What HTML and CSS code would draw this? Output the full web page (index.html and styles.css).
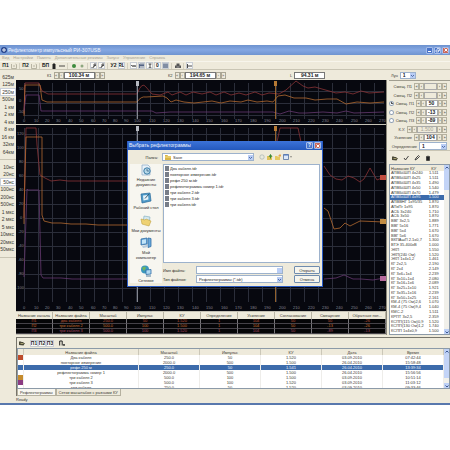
FILE: index.html
```html
<!DOCTYPE html>
<html lang="ru">
<head>
<meta charset="utf-8">
<title>Рефлектометр импульсный РИ-307USB</title>
<link rel="stylesheet" href="styles.css">
</head>
<body>
<div class="window">
  <header class="titlebar">
    <svg class="app-icon" viewBox="0 0 6 6"><circle cx="3" cy="3" r="3" fill="#27458c"/><path d="M1 3h4M3 1v4" stroke="#e8edf8" stroke-width="1"/></svg>
    <h1>Рефлектометр импульсный РИ-307USB</h1>
    <button class="cap" aria-label="Свернуть"><svg viewBox="0 0 6 6"><path d="M1 4.500h3" stroke="#fff"/></svg></button>
    <button class="cap" aria-label="Восстановить"><svg viewBox="0 0 6 6"><path d="M2 1.500h2.500v2.500M1 3h2.500v2h-2.500z" fill="none" stroke="#fff" stroke-width=".7"/></svg></button>
    <button class="cap close" aria-label="Закрыть"><svg viewBox="0 0 6 6"><path d="M1.500 1.500l3 3M4.500 1.500l-3 3" stroke="#fff"/></svg></button>
  </header>
  <nav class="menu"><a href="#">Вид</a><a href="#">Настройки</a><a href="#">Память</a><a href="#">Дополнительные режимы</a><a href="#">Запуск</a><a href="#">Управление</a><a href="#">Справка</a></nav>
  <div class="toolbar">
    <button>П1</button><button aria-label="Сохранить П1"><svg viewBox="0 0 6 6"><path d="M.5 1v4.500h5v-4l-1-.5M2 3h2" fill="none" stroke="#aaa694" stroke-width=".8"/></svg></button>
    <i></i><button>П2</button><button aria-label="Сохранить П2"><svg viewBox="0 0 6 6"><path d="M.5 1v4.500h5v-4l-1-.5M2 3h2" fill="none" stroke="#aaa694" stroke-width=".8"/></svg></button>
    <i></i><button>БП</button><button aria-label="Батарея"><svg viewBox="0 0 6 6"><path d="M1.500 1h3v5h-3zM2.500 0h1v1h-1z" fill="#222"/></svg></button><button aria-label="Линия"><svg viewBox="0 0 6 6"><path d="M0 3h6" stroke="#222" stroke-width=".8"/></svg></button>
    <i></i><button aria-label="Запуск"><svg viewBox="0 0 6 6"><circle cx="3" cy="3" r="2" fill="#3d8b3d"/></svg></button><button aria-label="Стоп"><svg viewBox="0 0 6 6"><circle cx="3" cy="3" r="1.500" fill="#8da77f"/></svg></button>
    <i></i><button class="on" aria-label="Курсор 1"><svg viewBox="0 0 6 6"><path d="M0 5h2l1-2M3 4V1h2v1.500H3" fill="none" stroke="#333" stroke-width=".8"/></svg></button><button class="on" aria-label="Курсор 2"><svg viewBox="0 0 6 6"><path d="M0 5h2l1-2M3 4V1h2v1.500H3" fill="none" stroke="#333" stroke-width=".8"/></svg></button>
    <i></i><button>У2</button><button class="on">RL</button>
    <i></i><button class="on" aria-label="Волна"><svg viewBox="0 0 6 6"><path d="M0 3l1-1 1 2 1-2 1 2 1-2 1 1" fill="none" stroke="#333" stroke-width=".7"/></svg></button><button class="on" aria-label="Таблица"><svg viewBox="0 0 6 6"><path d="M.5 1h5v4.500h-5zM.5 2.500h5M2 1v4M4 1v4" fill="none" stroke="#2a3d66" stroke-width=".7"/></svg></button><button class="on" aria-label="Высота"><svg viewBox="0 0 6 6"><path d="M1.500 1h3M3 1v4M1.500 5h3" stroke="#222" stroke-width=".8"/></svg></button><button class="on">0</button><button class="on" aria-label="Сетка"><svg viewBox="0 0 6 6"><path d="M0 1h6M0 3h6M0 5h6M1 1v4M3 1v4M5 1v4" stroke="#3c5275" stroke-width=".8"/></svg></button>
    <i></i><button aria-label="Печать"><svg viewBox="0 0 6 6"><path d="M1.500 .5h3v2h1.500v2.500h-6v-2.500h1.500z" fill="#555"/><path d="M1.500 4h3" stroke="#ddd" stroke-width=".6"/></svg></button>
    <i></i><button class="on" aria-label="Ширина"><svg viewBox="0 0 6 6"><path d="M.5 1v4M5.500 1v4M1 3h4" stroke="#222" stroke-width=".8"/></svg></button>
  </div>
  <div class="main">
    <aside class="scales">
      <div class="ranges"><button>625м</button><button>125м</button><button class="cur">250м</button><button>500м</button><button>1 км</button><button>2 км</button><button>4 км</button><button>8 км</button><button>16 км</button><button>32км</button><button>64км</button></div>
      <div class="pulses"><button>10нс</button><button>20нс</button><button class="cur">50нс</button><button>100нс</button><button>200нс</button><button>500нс</button><button>1 мкс</button><button>2 мкс</button><button>5 мкс</button><button>10мкс</button><button>20мкс</button><button>50мкс</button></div>
    </aside>
    <div class="work">
      <div class="cursors">
        <div class="field k1"><label for="k1">К1</label><button>«</button><button>‹</button><input id="k1" value="100.34 м"><button>›</button><button>»</button></div>
        <div class="field k2"><label for="k2">К2</label><button>«</button><button>‹</button><input id="k2" value="194.65 м"><button>›</button><button>»</button></div>
        <div class="field len"><label for="len">L</label><input id="len" value="94.31 м"></div>
        <div class="field mem"><label for="mem">Луч</label><select id="mem"><option>1</option></select></div>
      </div>
      <div class="upper">
        <div class="plots">
          <svg class="plot" viewBox="0 0 370 44">
            <defs><pattern id="g1" x="8" y="3" width="14" height="12" patternUnits="userSpaceOnUse"><path d="M.5 0v12M0 8.500h14" stroke="#2b2e3a" stroke-width="1"/></pattern></defs>
            <rect width="370" height="44" fill="#07080f"/><rect x="8" y="3" width="360" height="36" fill="url(#g1)"/>
            <path d="M8 34L9 3H23L26 11 32 14H121Q126 1 130 7L136 14 144 15 152 12 156 15 164 12 170 15 177 12 186 14 194 12 200 15 208 12 215 15 223 13 230 15 239 12 246 15 253 13 263 14 270 10 280 1 287 6 292 8 299 7 306 9 313 11 320 13 329 12 337 14 345 11 353 13 368 12" stroke="#8a3436"/>
            <path d="M8 36L9 5H24L26 20 31 22H121Q125 16 130 17L147 16 151 18 155 22 160 20 168 22 178 23 187 22 196 21 205 23 214 21 225 22 232 20 241 22 251 21 257 22 262 16 269 15 278 18 290 18 299 20 311 19 321 19 330 24 341 22 354 23 368 22" stroke="#b26a30"/>
            <path d="M8 31L10 15H23L25 31H136L140 33 154 32H257L264 34 273 31 283 33 290 33 307 32 321 33 330 31 338 33 368 32" stroke="#663870"/>
            <path d="M121.500 3v36" stroke="#a3a7b0"/><path d="M259.500 3v36" stroke="#b67934"/><path d="M120 1h3v5h-3z" fill="#b5b8c0" stroke="none"/><path d="M258 1h3v5h-3z" fill="#b67934" stroke="none"/>
            <g class="ticks"><text x="3" y="10">50</text><text x="3" y="22">0</text><text x="2" y="33">-50</text><text x="7" y="42">0</text><text x="18" y="42">10</text><text x="29" y="42">20</text><text x="40" y="42">30</text><text x="52" y="42">40</text><text x="63" y="42">50</text><text x="75" y="42">60</text><text x="86" y="42">70</text><text x="97" y="42">80</text><text x="108" y="42">90</text><text x="118" y="42">100</text><text x="133" y="42">110</text><text x="147" y="42">120</text><text x="161" y="42">130</text><text x="176" y="42">140</text><text x="190" y="42">150</text><text x="205" y="42">160</text><text x="219" y="42">170</text><text x="234" y="42">180</text><text x="248" y="42">190</text><text x="263" y="42">200</text><text x="277" y="42">210</text><text x="292" y="42">220</text><text x="306" y="42">230</text><text x="320" y="42">240</text><text x="335" y="42">250</text><text x="349" y="42">260</text><text x="363" y="42">270</text></g>
          </svg>
          <svg class="plot" viewBox="0 0 370 186">
            <defs><pattern id="g2" x="8" y="9" width="14" height="14" patternUnits="userSpaceOnUse"><path d="M.5 0v14M0 .5h14" stroke="#2b2e3a" stroke-width="1"/></pattern></defs>
            <rect width="370" height="186" fill="#07080f"/><rect x="8" y="3" width="360" height="174" fill="url(#g2)"/>
            <path d="M8 93L10 3H20L21 20 24 50 29 53 35 56 44 55 52 56H112" stroke="#8a3436"/>
            <path d="M8 99V85L10 12H26V90L28 96 36 98H45L55 99 70 99 82 100 112 100" stroke="#b26a30"/>
            <path d="M8 152L11 64 12 65H23L25 150 27 153 45 153 56 154H112" stroke="#663870"/>
            <path d="M261 17L264 3H282L285 17M308 41L314 50 320 54 326 55 332 51 338 53 344 57 348 54 354 43 361 55 368 52" stroke="#8a3436"/>
            <path d="M308 83L312 86 315 95 318 104 324 103 329 98 334 101 344 96 368 97" stroke="#b26a30"/>
            <path d="M308 154L320 153 328 150 337 154 345 154 357 155 368 153" stroke="#663870"/>
            <path d="M121.500 3v174" stroke="#a3a7b0"/><path d="M259.500 3v174" stroke="#b67934"/><path d="M120 1h3v5h-3z" fill="#b5b8c0" stroke="none"/><path d="M258 1h3v5h-3z" fill="#b67934" stroke="none"/>
            <path d="M364 50h6v5h-6z" fill="#c04c3e" stroke="none"/><path d="M364 94h6v5h-6z" fill="#c28d42" stroke="none"/><path d="M364 151h6v5h-6z" fill="#b66a9c" stroke="none"/>
            <g class="ticks"><text x="1" y="10">120</text><text x="1" y="24">100</text><text x="3" y="38">80</text><text x="3" y="52">60</text><text x="3" y="66">40</text><text x="3" y="80">20</text><text x="4" y="94">0</text><text x="2" y="108">-20</text><text x="2" y="122">-40</text><text x="2" y="136">-60</text><text x="2" y="150">-80</text><text x="0" y="164">-100</text><text x="7" y="184">0</text><text x="18" y="184">10</text><text x="29" y="184">20</text><text x="40" y="184">30</text><text x="52" y="184">40</text><text x="63" y="184">50</text><text x="75" y="184">60</text><text x="86" y="184">70</text><text x="97" y="184">80</text><text x="108" y="184">90</text><text x="118" y="184">100</text><text x="133" y="184">110</text><text x="147" y="184">120</text><text x="161" y="184">130</text><text x="176" y="184">140</text><text x="190" y="184">150</text><text x="205" y="184">160</text><text x="219" y="184">170</text><text x="234" y="184">180</text><text x="248" y="184">190</text><text x="263" y="184">200</text><text x="277" y="184">210</text><text x="292" y="184">220</text><text x="306" y="184">230</text><text x="320" y="184">240</text><text x="335" y="184">250</text><text x="349" y="184">260</text><text x="363" y="184">270</text></g>
          </svg>
          <table class="channels">
            <thead><tr><th>Название канала</th><th>Название файла</th><th>Масштаб</th><th>Импульс</th><th>КУ</th><th>Определение</th><th>Усиление</th><th>Согласование</th><th>Смещение</th><th>Обратные пот...</th></tr></thead>
            <tbody>
              <tr class="c1"><td>П1</td><td>два кабеля</td><td>250.0</td><td>50</td><td>1.520</td><td>1</td><td>104</td><td>50</td><td>50</td><td>-26</td></tr>
              <tr class="c2"><td>П2</td><td>три кабеля 2</td><td>500.0</td><td>100</td><td>1.500</td><td>1</td><td>104</td><td>50</td><td>-13</td><td>-26</td></tr>
              <tr class="c3"><td>П3</td><td>три кабеля 3</td><td>500.0</td><td>100</td><td>1.520</td><td>1</td><td>104</td><td>50</td><td>-89</td><td>-13</td></tr>
            </tbody>
          </table>
        </div>
        <aside class="side">
          <div class="params">
            <div class="prow dim"><label for="p1">Смещ. П1</label><button>«</button><button>‹</button><input id="p1" disabled><button>›</button><button>»</button></div>
            <div class="prow dim"><label for="p2">Смещ. П2</label><button>«</button><button>‹</button><input id="p2" disabled><button>›</button><button>»</button></div>
            <div class="prow"><input type="radio" name="ch" aria-label="П1" checked><label for="p3">Смещ. П1</label><button>«</button><button>‹</button><input id="p3" value="50"><button>›</button><button>»</button></div>
            <div class="prow"><input type="radio" name="ch" aria-label="П2"><label for="p4">Смещ. П2</label><button>«</button><button>‹</button><input id="p4" value="-13"><button>›</button><button>»</button></div>
            <div class="prow"><input type="radio" name="ch" aria-label="П3"><label for="p5">Смещ. П3</label><button>«</button><button>‹</button><input id="p5" value="-89"><button>›</button><button>»</button></div>
            <div class="prow dim wide"><label for="p6">К.У.</label><button>«</button><button>‹</button><input id="p6" value="1.500" disabled><button>›</button><button>»</button></div>
            <div class="prow"><label for="p7">Усиление</label><button>«</button><button>‹</button><input id="p7" value="104"><button>›</button><button>»</button></div>
            <div class="prow"><label for="p8">Определение</label><select id="p8"><option>1</option></select></div>
          </div>
          <div class="sidebar-tools">
            <button aria-label="Открыть"><svg viewBox="0 0 6 6"><path d="M0 5V1.500h2l.5.500h2v1H6l-1.500 2.500z" fill="#4a4937"/><path d="M1.500 3.500h3" stroke="#e6dc9c" stroke-width=".6"/></svg></button>
            <button aria-label="Применить"><svg viewBox="0 0 6 6"><path d="M1 3l1.500 2 3-4" fill="none" stroke="#333" stroke-width=".9"/></svg></button>
            <button aria-label="Изменить"><svg viewBox="0 0 6 6"><path d="M1 5l1-2 2.500-2.500 1 1L3 4z" fill="none" stroke="#333" stroke-width=".9"/></svg></button>
            <button aria-label="Удалить"><svg viewBox="0 0 6 6"><path d="M1 1.500h4M3 .5v1M1.500 2h3v3.500h-3z" fill="#222" stroke="#222" stroke-width=".6"/></svg></button>
          </div>
          <div class="listbox">
            <table class="cables">
              <thead><tr><th>Название КУ</th><th>КУ</th></tr></thead>
              <tbody>
                <tr><td>АПВБбШП 4x240</td><td>1.511</td></tr><tr><td>АПВБбШП 4x25</td><td>1.511</td></tr><tr><td>АПВБбШП 4x35</td><td>1.490</td></tr><tr><td>АПВБбШП 4x50</td><td>1.540</td></tr><tr><td>АПВБбШП 4x70</td><td>1.479</td></tr><tr class="sel"><td>АПВБбШП 4x95</td><td>1.500</td></tr><tr><td>АПВВНГ 1x95/35</td><td>1.870</td></tr><tr><td>АПвПг 1x95</td><td>1.870</td></tr><tr><td>АСБ 3x240</td><td>1.710</td></tr><tr><td>АСБ 3x50</td><td>1.870</td></tr><tr><td>ВВГ 3x2,5</td><td>1.889</td></tr><tr><td>ВВГ 5x16</td><td>1.771</td></tr><tr><td>ВВГ 5x4</td><td>1.670</td></tr><tr><td>ВВГ 5x6</td><td>1.670</td></tr><tr><td>ВКПАшП 2.1x0,7</td><td>1.300</td></tr><tr><td>ВТЭ 35-400кВ</td><td>1.000</td></tr><tr><td>ЭКП</td><td>1.550</td></tr><tr><td>ЭКП(240 Ом)</td><td>1.520</td></tr><tr><td>ЭКП 1x4x1,2</td><td>1.461</td></tr><tr><td>КГ 2x2,5</td><td>2.190</td></tr><tr><td>КГ 2x4</td><td>2.149</td></tr><tr><td>КГ 3x6+1x4</td><td>2.239</td></tr><tr><td>КГ 3x10+1x4</td><td>2.080</td></tr><tr><td>КГ 3x16+1x6</td><td>2.089</td></tr><tr><td>КГ 3x25+1x10</td><td>1.921</td></tr><tr><td>КГ 3x35+1x16</td><td>2.239</td></tr><tr><td>КГ 3x50+1x25</td><td>2.161</td></tr><tr><td>КМ-4 (75 Ом)2,6</td><td>1.070</td></tr><tr><td>КМ-4 (75 Ом)9,4</td><td>1.040</td></tr><tr><td>КМС-2</td><td>1.511</td></tr><tr><td>КРПТ 3x2,5</td><td>2.359</td></tr><tr><td>КСПП(115 Ом)0,9</td><td>1.520</td></tr><tr><td>КСПП(130 Ом)1,2</td><td>1.740</td></tr><tr><td>КСПП 1x4x0,9</td><td>1.500</td></tr>
              </tbody>
            </table>
            <div class="scroll"><button aria-label="Вверх"><svg viewBox="0 0 4 4"><path d="M.5 2.500L2 1l1.500 1.500" fill="none" stroke="#3a5791"/></svg></button><span class="thumb low"></span><button aria-label="Вниз"><svg viewBox="0 0 4 4"><path d="M.5 1.500L2 3l1.500-1.500" fill="none" stroke="#3a5791"/></svg></button></div>
          </div>
        </aside>
      </div>
      <section class="files">
        <div class="file-tools">
          <button aria-label="Открыть"><svg viewBox="0 0 6 6"><path d="M0 5V1.500h2l.5.500h2v1H6l-1.500 2.500z" fill="#4a4937"/><path d="M1.500 3.500h3" stroke="#e6dc9c" stroke-width=".6"/></svg></button>
          <span class="group"><button class="on">П1</button><button class="on">П2</button><button class="on">П3</button></span>
          <button aria-label="Убрать"><svg viewBox="0 0 6 6"><path d="M.7 5.500v-4.500h2.500v4.500M4 5h2M5 4v1.500" fill="none" stroke="#222"/></svg></button>
        </div>
        <div class="file-list">
          <table>
            <thead><tr><th class="mark"></th><th class="name">Название файла</th><th>Масштаб</th><th>Импульс</th><th>КУ</th><th>Дата</th><th>Время</th></tr></thead>
            <tbody>
              <tr><td class="m1"></td><td>Два кабеля</td><td>250.0</td><td>50</td><td>1.520</td><td>03.09.2010</td><td>07:42:44</td></tr>
              <tr><td></td><td>повторное измерение</td><td>2000.0</td><td>500</td><td>1.500</td><td>26.04.2010</td><td>15:58:48</td></tr>
              <tr class="sel"><td></td><td>рефл 250 м</td><td>250.0</td><td>50</td><td>1.541</td><td>26.04.2010</td><td>13:39:34</td></tr>
              <tr><td></td><td>рефлектограмма номер 1</td><td>2000.0</td><td>500</td><td>1.500</td><td>26.04.2010</td><td>15:56:56</td></tr>
              <tr><td class="m2"></td><td>три кабеля 2</td><td>500.0</td><td>100</td><td>1.500</td><td>03.09.2010</td><td>10:51:14</td></tr>
              <tr><td class="m3"></td><td>три кабеля 3</td><td>500.0</td><td>100</td><td>1.520</td><td>03.09.2010</td><td>11:03:12</td></tr>
              <tr><td></td><td>три кабеля</td><td>250.0</td><td>50</td><td>1.520</td><td>03.09.2010</td><td>09:33:46</td></tr>
            </tbody>
          </table>
          <div class="scroll"><button aria-label="Вверх"><svg viewBox="0 0 4 4"><path d="M.5 2.500L2 1l1.500 1.500" fill="none" stroke="#3a5791"/></svg></button><span class="thumb"></span><button aria-label="Вниз"><svg viewBox="0 0 4 4"><path d="M.5 1.500L2 3l1.500-1.500" fill="none" stroke="#3a5791"/></svg></button></div>
        </div>
        <div class="tabs"><button class="active">Рефлектограммы</button><button>Сетки масштабов с разными КУ</button></div>
      </section>
      <footer class="status">Ready</footer>
    </div>
  </div>
  <div class="dialog" role="dialog" aria-labelledby="dt">
    <div class="dlg-title"><h2 id="dt">Выбрать рефлектограммы</h2><button class="cap" aria-label="Справка">?</button><button class="cap close" aria-label="Закрыть"><svg viewBox="0 0 6 6"><path d="M1.500 1.500l3 3M4.500 1.500l-3 3" stroke="#fff"/></svg></button></div>
    <div class="dlg-body">
      <div class="look"><label for="dir">Папка:</label>
        <span class="combo"><svg viewBox="0 0 6 5"><path d="M0 0h2.500l.5 1H6v4H0z" fill="#d9b547"/><path d="M0 2h6" stroke="#f5e08c"/></svg><select id="dir"><option>Save</option></select></span>
        <span class="nav">
          <button aria-label="Назад"><svg viewBox="0 0 6 6"><circle cx="3" cy="3" r="2.200" fill="#e9ebdf" stroke="#a8b1b0" stroke-width=".7"/></svg></button>
          <button aria-label="Вверх"><svg viewBox="0 0 6 6"><path d="M0 2h2l.5.500H5V6H0z" fill="#dfc25a"/><path d="M2 3l1.500-2.500L5 3M3.500 1v3.500" fill="none" stroke="#3d8a32"/></svg></button>
          <button aria-label="Новая папка"><svg viewBox="0 0 6 6"><path d="M0 2h2l.5.500H5V6H0z" fill="#e6c860"/><path d="M5 0v3M3.500 1.500h3" stroke="#e39a3b" stroke-width=".8"/></svg></button>
          <button aria-label="Вид"><svg viewBox="0 0 9 6"><path d="M.5.500h5v5h-5z" fill="#dce8fa" stroke="#53709f" stroke-width=".8"/><path d="M.5 1h5" stroke="#4870b8"/><path d="M7 2.500h2l-1 1z" fill="#333"/></svg></button>
        </span></div>
      <div class="dlg-cols">
        <nav class="places">
          <a href="#"><svg viewBox="0 0 12 12"><path d="M2 1h6l2 2v8H2z" fill="#e8f1f8" stroke="#86a8c4" stroke-width=".7"/><circle cx="7" cy="7" r="3.200" fill="#b8d9e8" stroke="#3a7ba6"/><path d="M7 5v2h2" fill="none" stroke="#29557c" stroke-width=".7"/></svg>Недавние<br>документы</a>
          <a href="#"><svg viewBox="0 0 12 12"><path d="M1 2l9-1 1 8-9 2z" fill="#4e9ac8" stroke="#276899" stroke-width=".7"/><path d="M3 3.500l5-.5.500 4.500-5 1z" fill="#e6f3fa"/><path d="M5 6.500L9 2" stroke="#385b73"/></svg>Рабочий стол</a>
          <a href="#"><svg viewBox="0 0 12 12"><path d="M4 1l6 1-1 7-6-1z" fill="#d4e8ef" stroke="#7ba9ba" stroke-width=".6"/><path d="M1 4l4 1 1-1 5 2-2 5-7-2z" fill="#efd273" stroke="#bfa344" stroke-width=".6"/></svg>Мои документы</a>
          <a href="#"><svg viewBox="0 0 12 12"><path d="M1 2l6-1v6l-6 1zM8 1l3 .5v8l-3 1z" fill="#69a9dc" stroke="#346fa4" stroke-width=".8"/><path d="M2 3l4-.7v4L2 7z" fill="#c2e4f8"/><path d="M2 9l5-1 1 2-5 1z" fill="#b8cbdc"/></svg>Мой<br>компьютер</a>
          <a href="#"><svg viewBox="0 0 12 12"><circle cx="5" cy="4.500" r="4" fill="#3c97bd"/><path d="M2 3q3-3 4 0l-2 3z" fill="#73b65c"/><path d="M6 5l5-.5V9l-5 .5z" fill="#b0daf2" stroke="#2e6da7" stroke-width=".8"/><path d="M6 11h5" stroke="#567e9e"/></svg>Сетевое</a>
        </nav>
        <div class="dlg-main">
          <ul><li>Два кабеля.tdr</li><li>повторное измерение.tdr</li><li>рефл 250 м.tdr</li><li>рефлектограмма номер 1.tdr</li><li>три кабеля 2.tdr</li><li>три кабеля 3.tdr</li><li>три кабеля.tdr</li></ul>
          <form>
            <label for="fn">Имя файла:</label><span class="combo"><input id="fn"><b class="drop"></b></span><button type="button" class="default">Открыть</button>
            <label for="ft">Тип файлов:</label><span class="combo"><select id="ft"><option>Рефлектограммы (*.tdr)</option></select></span><button type="button">Отмена</button>
          </form>
        </div>
      </div>
    </div>
  </div>
</div>
</body>
</html>
```
FILE: styles.css
```css
* { box-sizing: border-box; }
body { margin: 0; padding-top: 45px; background: #fff; font: 4px/5px "Liberation Sans", Arial, sans-serif; color: #3a3832; }
button, input, select { font: inherit; color: inherit; margin: 0; padding: 0; border: 0; background: none; min-width: 0; border-radius: 0; appearance: none; }
button { display: flex; align-items: center; justify-content: center; }
svg { display: block; }
a { color: inherit; text-decoration: none; }
h1, h2, ul { margin: 0; padding: 0; font-size: inherit; list-style: none; }
table { border-collapse: separate; border-spacing: 0; table-layout: fixed; width: 100%; }
th, td { padding: 0; font-weight: 400; text-align: center; white-space: nowrap; }

.window { position: relative; background: #eeeadb; border-bottom: 2px solid #5878ad; }
.titlebar { display: flex; align-items: center; gap: 1px; height: 10px; padding: 0 1px; background: linear-gradient(#6d92cf, #84a7e2 50%, #6f94d0); color: #eef3fc; }
.titlebar h1 { flex: 1; font-size: 5px; font-weight: 400; line-height: 8px; }
.app-icon { width: 6px; height: 6px; }
.cap { width: 7px; height: 7px; border: 1px solid #a6bdea; border-radius: 1px; background: #4a75c9; color: #fff; font-size: 5px; font-weight: 700; }
.cap svg { width: 6px; height: 6px; flex: none; }
.cap.close { background: #c9685c; }
.menu { display: flex; gap: 4px; height: 6px; padding: 0 2px; color: #a5a192; line-height: 6px; }
.toolbar { display: flex; align-items: center; height: 9px; padding: 0 2px; gap: 1px; border-top: 1px solid #f7f5ec; border-bottom: 1px solid #c9c5b4; color: #222; font-size: 5px; font-weight: 700; }
.toolbar button { width: 7px; height: 7px; }
.toolbar svg, .sidebar-tools svg, .file-tools svg { width: 6px; height: 6px; flex: none; }
.toolbar i { width: 1px; height: 6px; margin: 0 1px; background: #d3cfbf; }
.on { background: #fbfbf8; outline: 1px solid #c8cdd3; outline-offset: -1px; }

.main { display: grid; grid-template-columns: 16px minmax(0, 1fr); }
.scales { color: #3c3a34; font-size: 5px; }
.scales button { display: block; width: 100%; height: 8px; margin-bottom: -1px; padding-right: 2px; line-height: 8px; text-align: right; white-space: nowrap; }
.scales button:nth-child(even) { margin-bottom: 0; }
.scales .cur { background: #fff; outline: 1px solid #c9cfda; outline-offset: -1px; }
.ranges { padding: 3px 0 4px; border-bottom: 1px solid #c9c5b4; }
.pulses { padding: 3px 0 4px; border-bottom: 1px solid #c9c5b4; }

.cursors { display: grid; grid-template-columns: 124fr 137fr 96fr 77fr; height: 10px; align-items: center; }
.field { display: flex; align-items: center; height: 8px; }
.field label { margin-right: 2px; }
.field button { width: 5px; height: 7px; border: 1px solid #aaa695; color: #555; }
.field input { width: 31px; height: 7px; border: 1px solid #777; background: #fff; color: #222; text-align: center; font-size: 5px; font-weight: 700; }
.k1 { padding-left: 31px; }
.k2 { padding-left: 28px; }
.len { padding-left: 13px; }
.mem { padding-left: 18px; }
select { background: #fff url("data:image/svg+xml,%3Csvg xmlns='http://www.w3.org/2000/svg' viewBox='0 0 5 5'%3E%3Crect width='5' height='5' fill='%23b9cdf5'/%3E%3Cpath d='M1 2l1.500 1.500L4 2' fill='none' stroke='%233a5791' stroke-width='.8'/%3E%3C/svg%3E") right center / 5px 5px no-repeat; border: 1px solid #9db2cc; padding-left: 2px; }
.mem select { width: 16px; height: 7px; color: #222; font-size: 5px; font-weight: 700; }

.upper { display: grid; grid-template-columns: minmax(0, 370fr) minmax(0, 64fr); }
.plots { display: flex; flex-direction: column; gap: 1px; background: #c5c2b6; }
.plot { width: 100%; fill: none; stroke-width: .8; }
.ticks text { font-size: 4px; fill: #858791; stroke: none; }
.channels { background: #050507; }
.channels th { height: 7px; background: #eeeadb; border-right: 1px solid #b9b5a5; }
.channels td { height: 5px; line-height: 4px; border-right: 1px solid #77757a; border-bottom: 1px solid #454248; }
.c1 { color: #c0553a; }
.c2 { color: #cc7032; }
.c3 { color: #a84a62; }

.side { display: flex; flex-direction: column; padding-left: 2px; border-left: 1px solid #8c897c; }
.params { padding: 1px 3px 0 0; border-top: 1px solid #a19e90; }
.prow { display: flex; align-items: center; justify-content: flex-end; height: 8px; margin-bottom: 1px; }
.prow:nth-child(even) { margin-bottom: 0; }
.prow label { margin-right: 2px; white-space: nowrap; }
.prow button { width: 5px; height: 7px; border: 1px solid #b5b19f; color: #333; }
.prow input { width: 13px; height: 7px; border: 1px solid #aaa; background: #fff; color: #222; font-size: 5px; font-weight: 700; text-align: center; }
.prow.dim input { background: #eeeadb; color: #a6a292; font-weight: 400; }
.prow.wide input { width: 20px; }
.prow input[type=radio] { width: 5px; height: 5px; margin-right: 2px; border: 1px solid #8fa0b5; border-radius: 50%; }
.prow input[type=radio]:checked { background: radial-gradient(#555 1px, #fff 1px); }
.prow select { width: 28px; height: 8px; color: #222; font-size: 5px; font-weight: 700; }
.sidebar-tools { display: flex; align-items: center; gap: 5px; height: 14px; padding-left: 3px; border-top: 1px solid #c9c5b4; }
.listbox { height: 171px; display: flex; border: 1px solid #8c9aa8; background: #fff; overflow: hidden; }
.cables { flex: 1; height: 169px; }
.cables th { height: 6px; background: #eeeadb; }
.cables th:first-child, .cables td:first-child { width: 62%; text-align: left; padding-left: 1px; }
.cables td { line-height: 4px; }
tr.sel td { background: #3c6bab; color: #eef3fb; }
.scroll { display: flex; flex-direction: column; width: 5px; flex: none; background: #f1f0ea; }
.scroll button { width: 5px; height: 5px; background: #bdd0f6; }
.scroll svg { width: 4px; height: 4px; }
.scroll .thumb { flex: 1; margin-bottom: 5px; background: #c3d4f7; }
.scroll .low { flex: 0 0 20px; margin-bottom: auto; }

.files { margin-top: 2px; border-top: 1px solid #77756b; border-left: 1px solid #77756b; }
.file-tools { display: flex; align-items: center; gap: 4px; height: 10px; padding-left: 1px; color: #222; font-size: 5px; }
.file-tools .group { display: flex; }
.file-tools button { width: 8px; height: 7px; font-weight: 700; }
.file-list { display: flex; align-items: stretch; height: 41px; border: 1px solid #8c9aa8; background: #fff; overflow: hidden; }
.file-list table { flex: 1; align-self: flex-start; }
.file-list th { height: 6px; background: #eeeadb; border-right: 1px solid #cbc7b8; }
.file-list td { height: 5px; line-height: 4px; border-right: 1px solid #eeedea; }
.mark { width: 6px; }
.name { width: 27%; }
td.m1 { background: #bd4c2c; }
td.m2 { background: #c58b2d; }
td.m3 { background: #8b3b82; }
.tabs { display: flex; height: 7px; }
.tabs button { height: 7px; padding: 0 2px; border: 1px solid #b5b19f; border-top: 0; }
.tabs .active { background: #f8f7f1; }
.status { height: 7px; line-height: 7px; }

.dialog { position: absolute; left: 127px; top: 96px; width: 196px; background: #eeeadb; border: 1px solid #2a5bc4; border-top: 0; color: #2b2a26; }
.dlg-title { display: flex; align-items: center; gap: 1px; height: 9px; padding: 0 1px; background: linear-gradient(#3c73d8, #2459bd); color: #eef3fd; }
.dlg-title h2 { flex: 1; font-size: 5px; font-weight: 400; }
.dlg-body { padding: 3px 2px 3px; }
.look { display: flex; align-items: center; height: 8px; margin-bottom: 3px; }
.look label { width: 32px; padding-right: 4px; text-align: right; }
.combo { display: flex; align-items: center; height: 8px; border: 1px solid #9db2cc; background-color: #fff; }
.combo select, .combo input { flex: 1; height: 6px; border: 0; }
.combo > svg { width: 6px; height: 5px; margin-left: 2px; flex: none; }
.look .combo { width: 92px; }
.nav { display: flex; gap: 2px; margin-left: 5px; }
.nav svg { height: 6px; }
.drop { width: 5px; height: 5px; background: #b9cdf5; }
.dlg-cols { display: grid; grid-template-columns: 32px 1fr; gap: 1px; }
.places { display: flex; flex-direction: column; justify-content: space-between; background: #f7f6f0; text-align: center; }
.places a { display: block; white-space: nowrap; }
.places svg { width: 12px; height: 12px; margin: 0 auto 1px; }
.dlg-main ul { height: 99px; padding: 1px; border: 1px solid #9db2cc; background: #fff; }
.dlg-main li { height: 6px; line-height: 6px; }
.dlg-main li::before { content: ""; display: inline-block; width: 4px; height: 5px; margin-right: 1px; background: #777d88; vertical-align: -1px; }
.dlg-main form { display: grid; grid-template-columns: 32px 87px 1fr; gap: 1px; align-items: center; padding-top: 3px; }
.dlg-main form button { width: 26px; height: 8px; justify-self: end; border: 1px solid #6f8cae; border-radius: 1px; background: #f6f5ee; }
```
